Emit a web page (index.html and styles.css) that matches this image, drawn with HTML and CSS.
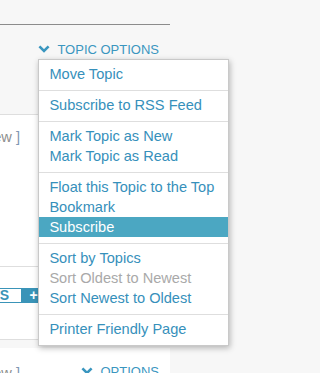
FILE: index.html
```html
<!DOCTYPE html>
<html>
<head>
<meta charset="utf-8">
<link rel="stylesheet" href="styles.css">
</head>
<body>
<div class="col">
  <div class="top"></div>
  <div class="opts">
    <div class="toggle">
      <svg class="chev" viewBox="0 0 12 8" width="12" height="8"><polyline points="1.4,1.4 6,6 10.6,1.4" fill="none" stroke="currentColor" stroke-width="2.6"/></svg>
      <span class="toggle-label">TOPIC OPTIONS</span>
      <div class="menu">
        <div class="sec"><a class="item">Move Topic</a></div>
        <div class="sec"><a class="item">Subscribe to RSS Feed</a></div>
        <div class="sec"><a class="item">Mark Topic as New</a><a class="item">Mark Topic as Read</a></div>
        <div class="sec"><a class="item">Float this Topic to the Top</a><a class="item">Bookmark</a><a class="item active">Subscribe</a></div>
        <div class="sec"><a class="item">Sort by Topics</a><a class="item disabled">Sort Oldest to Newest</a><a class="item">Sort Newest to Oldest</a></div>
        <div class="sec"><a class="item">Printer Friendly Page</a></div>
      </div>
    </div>
  </div>
  <div class="row row-msg">
    <div class="view"><span class="br">[</span>&nbsp;View&nbsp;<span class="br">]</span></div>
  </div>
  <div class="row row-kudos">
    <div class="kudos">
      <div class="kudos-wrap"><span class="kudos-label">KUDOS</span></div>
      <span class="kudos-plus">+</span>
    </div>
  </div>
  <div class="gap"></div>
  <div class="panel">
    <div class="view"><span class="br">[</span>&nbsp;View&nbsp;<span class="br">]</span></div>
    <div class="toggle">
      <svg class="chev" viewBox="0 0 12 8" width="12" height="8"><polyline points="1.4,1.4 6,6 10.6,1.4" fill="none" stroke="currentColor" stroke-width="2.6"/></svg>
      <span class="toggle-label">OPTIONS</span>
    </div>
  </div>
</div>
</body>
</html>
```

FILE: styles.css
```css
html, body {
  margin: 0;
  padding: 0;
  background: #f7f7f7;
  font-family: "Liberation Sans", Arial, sans-serif;
  overflow: hidden;
}

.col {
  width: 170px;
}

.top {
  height: 24px;
  border-bottom: 1px solid #8c8c8c;
}

.opts {
  box-sizing: border-box;
  height: 89px;
  padding: 17px 11px 0 0;
  display: flex;
  justify-content: flex-end;
  align-items: flex-start;
}

.toggle {
  position: relative;
  display: flex;
  align-items: center;
  gap: 7px;
  font-size: 13px;
  line-height: 16px;
  color: #3a96bf;
  white-space: nowrap;
}

.chev {
  display: block;
  margin-top: -2px;
}

.menu {
  position: absolute;
  z-index: 10;
  top: calc(100% + 1px);
  left: 0;
  box-sizing: border-box;
  width: 191px;
  background: #fff;
  border: 1px solid #c9c9c9;
  box-shadow: 1px 2px 6px rgba(0, 0, 0, 0.28);
  font-size: 14.6px;
  line-height: 20px;
}

.sec {
  padding: 4px 0 6px;
}

.sec + .sec {
  border-top: 1px solid #dedede;
}

.item {
  display: block;
  padding: 0 10px;
  color: #3690bb;
}

.item.active {
  background: #4ba7c2;
  color: #fff;
}

.item.disabled {
  color: #a9a9a9;
}

.row {
  background: #fff;
  border-top: 1px solid #dedede;
}

.row-msg {
  box-sizing: border-box;
  height: 152px;
  padding-top: 13px;
}

.view {
  width: 20px;
  display: flex;
  justify-content: flex-end;
  white-space: nowrap;
  font-size: 14.6px;
  line-height: 18px;
  color: #8e8e8e;
}

.br {
  color: #7f97b3;
}

.row-kudos {
  box-sizing: border-box;
  height: 73px;
  padding-top: 21px;
}

.kudos {
  display: flex;
  height: 15px;
}

.kudos-wrap {
  width: 22px;
  display: flex;
  justify-content: flex-end;
}

.kudos-label {
  box-sizing: border-box;
  height: 15px;
  padding: 0 12px 0 8px;
  border: 1px solid #3a94b8;
  background: #fff;
  color: #3a94b8;
  font-weight: bold;
  font-size: 14px;
  line-height: 13px;
  white-space: nowrap;
}

.kudos-plus {
  width: 23px;
  height: 15px;
  background: #3a94b8;
  color: #fff;
  font-weight: bold;
  font-size: 14px;
  line-height: 15px;
  text-align: center;
}

.gap {
  height: 8px;
  border-top: 1px solid #dedede;
}

.panel {
  box-sizing: border-box;
  height: 40px;
  background: #fff;
  padding: 16px 11px 0 0;
  display: flex;
  justify-content: space-between;
  align-items: flex-start;
}

.panel .view {
  line-height: 16px;
  margin-top: 1px;
}
```
